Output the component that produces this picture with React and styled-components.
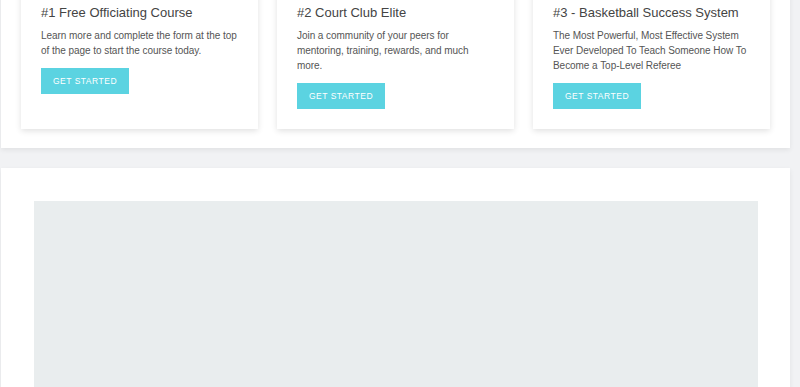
import React from "react";
import styled, { createGlobalStyle } from "styled-components";

const Global = createGlobalStyle`
  html, body { margin: 0; padding: 0; background: #f1f2f4; overflow: hidden; }
  body { font-family: "Liberation Sans", Arial, sans-serif; }
`;

const Page = styled.div`
  display: flex;
  flex-direction: column;
  gap: 20px;
  padding: 0 10px 0 1px;
  margin-top: -16px;
`;

const Panel = styled.section`
  background: #fff;
  box-shadow: 0 2px 5px rgba(0, 0, 0, 0.07);
  padding: ${(p) => p.$pad};
`;

const CardRow = styled.div`
  display: grid;
  grid-template-columns: repeat(3, 1fr);
  gap: 19px;
`;

const Card = styled.div`
  background: #fff;
  box-shadow: 0 2px 6px rgba(0, 0, 0, 0.12);
  padding: 20px;
  display: flex;
  flex-direction: column;
  align-items: flex-start;
`;

const Title = styled.h3`
  margin: 0 0 7px;
  font-size: 13px;
  line-height: 17px;
  font-weight: 400;
  color: #444;
`;

const Body = styled.p`
  margin: 0 0 9.5px;
  font-size: 10px;
  letter-spacing: -0.05px;
  line-height: 15px;
  color: #555;
`;

const Button = styled.a`
  display: inline-flex;
  align-items: center;
  justify-content: center;
  width: 88px;
  height: 26px;
  background: #5bd3e1;
  color: #fff;
  font-size: 8.5px;
  letter-spacing: 0.5px;
  text-transform: uppercase;
`;

const Media = styled.div`
  background: #e9edee;
  height: 260px;
`;

const cards = [
  {
    title: "#1 Free Officiating Course",
    body: "Learn more and complete the form at the top of the page to start the course today.",
  },
  {
    title: "#2 Court Club Elite",
    body: "Join a community of your peers for mentoring, training, rewards, and much more.",
  },
  {
    title: "#3 - Basketball Success System",
    body: "The Most Powerful, Most Effective System Ever Developed To Teach Someone How To Become a Top-Level Referee",
  },
];

export default function App() {
  return (
    <>
      <Global />
      <Page>
        <Panel $pad="0 20px 19.5px">
          <CardRow>
            {cards.map((c) => (
              <Card key={c.title}>
                <Title>{c.title}</Title>
                <Body>{c.body}</Body>
                <Button>Get Started</Button>
              </Card>
            ))}
          </CardRow>
        </Panel>
        <Panel $pad="33px 32px 0 33px">
          <Media />
        </Panel>
      </Page>
    </>
  );
}
